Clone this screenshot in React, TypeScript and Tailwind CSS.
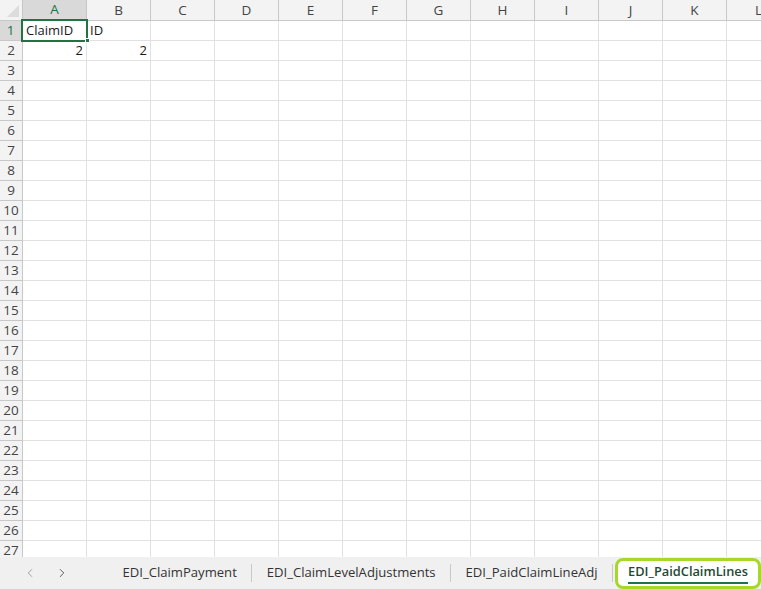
import { ChevronLeft, ChevronRight } from "lucide-react";

const cols = ["A", "B", "C", "D", "E", "F", "G", "H", "I", "J", "K", "L"];
const rows = Array.from({ length: 27 }, (_, i) => i + 1);

const cells: Record<string, { v: string; right?: boolean }> = {
  A1: { v: "ClaimID" },
  B1: { v: "ID" },
  A2: { v: "2", right: true },
  B2: { v: "2", right: true },
};

const tabs = ["EDI_ClaimPayment", "EDI_ClaimLevelAdjustments", "EDI_PaidClaimLineAdj"];

export default function App() {
  return (
    <div className="flex h-[589px] w-[761px] flex-col overflow-hidden bg-white font-['Open_Sans',sans-serif] text-[13px] text-[#1a1a1a]">
      <div className="relative h-[557px] overflow-hidden">
        <div className="grid grid-cols-[23px_repeat(12,64px)]">
          {/* header row */}
          <div className="relative h-[21px] border-b border-r border-[#c8c8c8] bg-[#f3f3f3]">
            <div className="absolute bottom-[3px] right-[3px] h-0 w-0 border-b-[12px] border-l-[12px] border-b-[#dcdcdc] border-l-transparent" />
          </div>
          {cols.map((c) => (
            <div
              key={c}
              className={
                c === "A"
                  ? "flex h-[21px] items-center justify-center border-b-2 border-r border-b-[#217346] border-r-[#c8c8c8] bg-[#d9d9d9] text-[13.5px] text-[#217346]"
                  : "flex h-[21px] items-center justify-center border-b border-r border-[#c8c8c8] bg-[#f3f3f3] text-[13.5px] text-[#444]"
              }
            >
              {c}
            </div>
          ))}
          {rows.map((r) => (
            <Row key={r} r={r} />
          ))}
        </div>
        {/* selected cell A1 */}
        <div className="absolute left-[21px] top-[19px] h-[23px] w-[67px] border-2 border-[#217346]" />
        <div className="absolute left-[85px] top-[38px] h-[5px] w-[5px] border border-white bg-[#217346]" />
      </div>
      <div className="flex h-[32px] items-center bg-[#f0f0f0] text-[13.1px] text-[#333]">
        <div className="flex w-[108px] shrink-0 items-center pl-[23px] text-[#999]">
          <ChevronLeft size={14} strokeWidth={1.5} />
          <ChevronRight size={14} strokeWidth={1.5} className="ml-[18px] text-[#444]" />
        </div>
        {tabs.map((t) => (
          <div key={t} className="flex shrink-0 items-center">
            <span className="px-[14.5px]">{t}</span>
            <span className="h-[18px] w-px bg-[#c8c8c8]" />
          </div>
        ))}
        <div className="ml-auto flex h-[31px] w-[146px] shrink-0 items-center justify-center rounded-[8px] border-[3px] border-[#a6d82a] bg-white">
          <span className="border-b-2 border-[#217346] pb-[1px] text-[12.8px] font-semibold text-[#1e4a32]">
            EDI_PaidClaimLines
          </span>
        </div>
      </div>
    </div>
  );
}

function Row({ r }: { r: number }) {
  return (
    <>
      <div
        className={
          r === 1
            ? "flex h-[20px] items-center justify-center border-b border-r-2 border-b-[#c8c8c8] border-r-[#217346] bg-[#d9d9d9] text-[13.5px] text-[#217346]"
            : "flex h-[20px] items-center justify-center border-b border-r border-[#c8c8c8] bg-[#f3f3f3] text-[13.5px] text-[#444]"
        }
      >
        {r}
      </div>
      {cols.map((c) => {
        const cell = cells[c + r];
        return (
          <div
            key={c}
            className={
              "flex h-[20px] items-center whitespace-nowrap border-b border-r border-[#e1e1e1] px-[3px] " +
              (cell?.right ? "justify-end" : "justify-start")
            }
          >
            {cell?.v}
          </div>
        );
      })}
    </>
  );
}
